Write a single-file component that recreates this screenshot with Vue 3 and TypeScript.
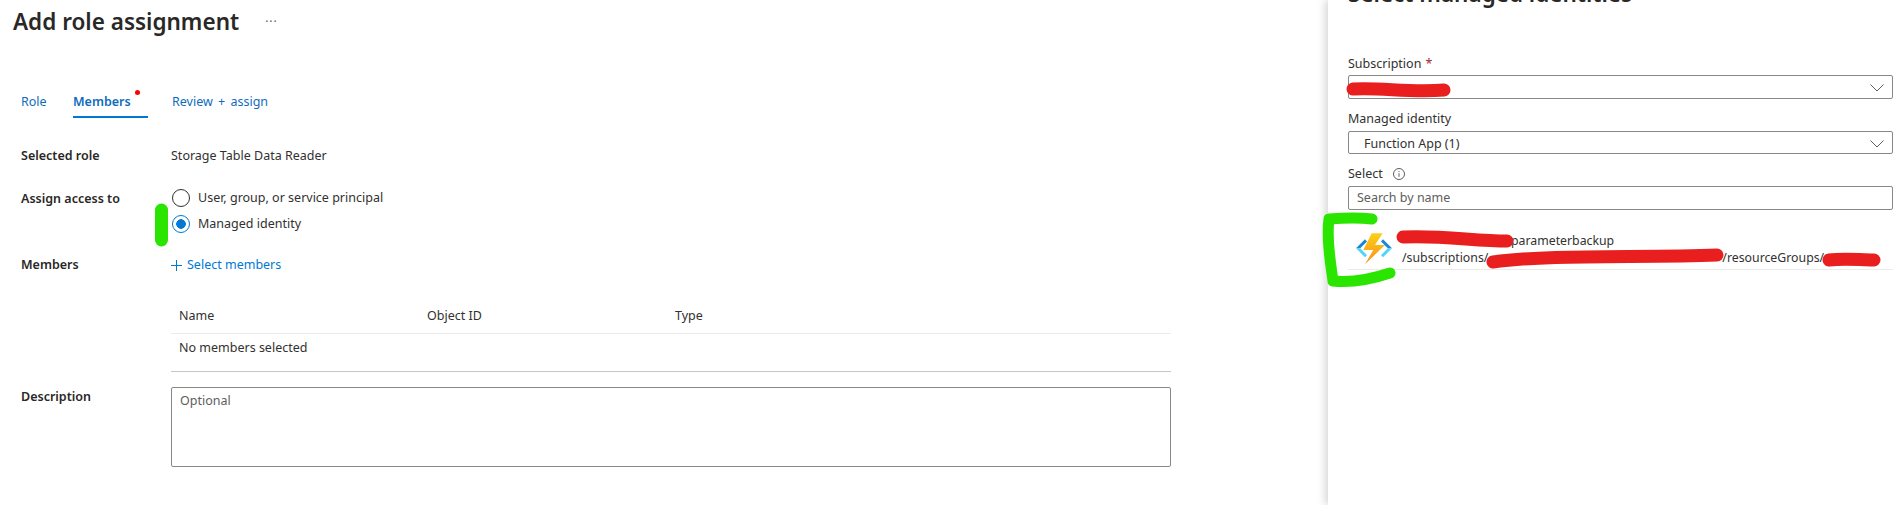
<script setup lang="ts">
import { ref } from "vue";

const tabs = ["Role", "Members", "Review + assign"];
const activeTab = ref<string>("Members");

const accessOptions = ["User, group, or service principal", "Managed identity"];
const assignTo = ref<string>("Managed identity");

const columns = ["Name", "Object ID", "Type"];
</script>

<template>
  <div class="page">
    <main class="blade">
      <header class="blade-head">
        <h1>Add role assignment</h1>
        <span class="more">···</span>
      </header>

      <nav class="tabs">
        <a v-for="tab in tabs" :key="tab" class="tab" :class="{ active: tab === activeTab }">
          {{ tab }}
          <i v-if="tab === 'Members'" class="dot"></i>
        </a>
      </nav>

      <div class="row first">
        <label>Selected role</label>
        <div>Storage Table Data Reader</div>
      </div>

      <div class="row access">
        <label>Assign access to</label>
        <div>
          <div v-for="opt in accessOptions" :key="opt" class="radio-line">
            <span class="radio" :class="{ on: opt === assignTo }"></span>
            {{ opt }}
          </div>
        </div>
      </div>

      <div class="row members">
        <label>Members</label>
        <a class="add-link">
          <svg class="plus" viewBox="0 0 11 11"><path d="M5.500 0v11M0 5.500h11" /></svg>
          Select members
        </a>
      </div>

      <div class="table">
        <div class="thead">
          <span v-for="col in columns" :key="col">{{ col }}</span>
        </div>
        <div class="tbody">No members selected</div>
      </div>

      <div class="row description">
        <label>Description</label>
        <textarea placeholder="Optional"></textarea>
      </div>
    </main>

    <aside class="panel">
      <h2>Select managed identities</h2>

      <div class="field sub">
        <div class="field-label">Subscription <b>*</b></div>
        <div class="box">
          <svg class="chevron" viewBox="0 0 14 8"><path d="M.5.5 7 7l6.500-6.500" /></svg>
        </div>
      </div>

      <div class="field">
        <div class="field-label">Managed identity</div>
        <div class="box short">
          <span class="value">Function App (1)</span>
          <svg class="chevron" viewBox="0 0 14 8"><path d="M.5.5 7 7l6.500-6.500" /></svg>
        </div>
      </div>

      <div class="field">
        <div class="field-label">
          Select
          <svg class="info" viewBox="0 0 12 12">
            <circle cx="6" cy="6" r="5.500" />
            <path d="M6 5.200v3.600M6 3v1" />
          </svg>
        </div>
        <input class="search" placeholder="Search by name" />
      </div>

      <div class="result">
        <svg class="func-icon" viewBox="0 0 36 33">
          <defs>
            <linearGradient id="bolt" x1="0" y1="0" x2="0" y2="1">
              <stop offset="0" stop-color="#fcd116" />
              <stop offset="1" stop-color="#f78d1e" />
            </linearGradient>
          </defs>
          <path d="M9 6.300 0 15.300h4.200L11 8.500z" fill="#1a86d8" />
          <path d="M0 15.300l9 9 2-2-6.800-7z" fill="#50d4fa" />
          <path d="M27 6.300l9 9h-4.200L25 8.500z" fill="#1a86d8" />
          <path d="M36 15.300l-9 9-2-2 6.800-7z" fill="#50d4fa" />
          <path d="M26.700.3H15.700L7.300 17h10L9 31.300 29 12H19z" fill="url(#bolt)" />
        </svg>
        <div class="result-text">
          <div><span class="hidden-name"></span>parameterbackup</div>
          <div>/subscriptions/<span class="hidden-sub"></span>/resourceGroups/</div>
        </div>
      </div>
    </aside>

    <!-- hand-drawn marks on top of the screenshot -->
    <svg class="marks" viewBox="0 0 1901 505">
      <g fill="none" stroke-linecap="round" stroke-linejoin="round">
        <path d="M161.500 210V240" stroke="#2ae500" stroke-width="13" />
        <path d="M1372 219C1355 217 1342 218 1329 219C1326 240 1331 265 1333 281C1352 283 1372 279 1390 273" stroke="#2ae500" stroke-width="11" />
        <g stroke="#e91f1f">
          <path d="M1353 89C1380 87 1410 93 1444 90" stroke-width="13" />
          <path d="M1403 237C1440 235 1475 241 1507 241" stroke-width="13" />
          <path d="M1493 262C1550 254 1640 258 1717 255" stroke-width="13" />
          <path d="M1829 260C1845 258 1860 260 1874 260" stroke-width="13" />
        </g>
      </g>
    </svg>
  </div>
</template>

<style scoped>
.page {
  position: relative;
  display: flex;
  width: 1901px;
  height: 505px;
  overflow: hidden;
  background: #fff;
  color: #323130;
  font-family: "Noto Sans", "Open Sans", sans-serif;
  font-size: 12.500px;
  line-height: 20px;
}

.blade {
  flex: 1;
  padding-left: 21px;
}

.blade-head {
  display: flex;
  align-items: center;
  height: 44px;
  margin-left: -8px;
}

h1 {
  margin: 0;
  color: #292827;
  font-size: 22.500px;
  font-weight: 600;
  white-space: nowrap;
}

.more {
  margin-left: 26px;
  color: #605e5c;
  font-size: 12px;
  letter-spacing: 1px;
}

.tabs {
  display: flex;
  margin-top: 44px;
  height: 30px;
}

.tab {
  position: relative;
  height: 30px;
  box-sizing: border-box;
  line-height: 28px;
  color: #0f6cbd;
  word-spacing: 2px;
  white-space: nowrap;
}

.tab:nth-child(1) {
  width: 52px;
}

.tab:nth-child(2) {
  width: 75px;
  margin-right: 24px;
}

.tab.active {
  font-weight: 600;
  border-bottom: 2px solid #0078d4;
}

.dot {
  position: absolute;
  top: 2px;
  left: 62px;
  width: 5px;
  height: 5px;
  border-radius: 50%;
  background: #f00;
}

.row {
  display: grid;
  grid-template-columns: 150px 1000px;
}

.row label {
  color: #292827;
  font-weight: 600;
}

.first {
  margin-top: 28px;
}

.access {
  margin-top: 19px;
}

.access label {
  line-height: 28px;
}

.radio-line {
  display: flex;
  align-items: center;
  gap: 8px;
  height: 26px;
  padding-left: 1px;
}

.radio {
  box-sizing: border-box;
  width: 18px;
  height: 18px;
  border: 1px solid #323130;
  border-radius: 50%;
}

.radio.on {
  border-color: #0078d4;
  background: radial-gradient(circle, #0078d4 0 4.500px, #fff 5px);
}

.members {
  margin-top: 18px;
}

.add-link {
  display: flex;
  align-items: center;
  gap: 5px;
  color: #0078d4;
}

.plus {
  width: 11px;
  height: 11px;
  fill: none;
  stroke: #0078d4;
}

.table {
  width: 1000px;
  margin: 24px 0 0 150px;
}

.thead {
  display: grid;
  grid-template-columns: 248px 248px 1fr;
  height: 35px;
  box-sizing: border-box;
  padding: 7px 0 0 8px;
  border-bottom: 1px solid #edebe9;
}

.tbody {
  height: 38px;
  box-sizing: border-box;
  padding: 4px 0 0 8px;
  border-bottom: 1px solid #c8c6c4;
}

.description {
  margin-top: 15px;
}

textarea {
  display: block;
  box-sizing: border-box;
  width: 1000px;
  height: 80px;
  padding: 3px 8px;
  border: 1px solid #8a8886;
  border-radius: 2px;
  outline: none;
  resize: none;
  font: inherit;
}

textarea::placeholder,
.search::placeholder {
  color: #605e5c;
  opacity: 1;
}

.panel {
  flex: none;
  box-sizing: border-box;
  width: 573px;
  padding: 0 8px 0 20px;
  box-shadow: -3px 0 8px rgba(0, 0, 0, 0.16);
}

h2 {
  margin: -21px 0 0;
  color: #292827;
  font-size: 22.500px;
  line-height: 30px;
  font-weight: 600;
  white-space: nowrap;
}

.field {
  margin-top: 10px;
}

.sub {
  margin-top: 44px;
}

.field-label {
  display: flex;
  align-items: center;
  gap: 4px;
  height: 20px;
  margin-bottom: 2px;
}

.sub .field-label {
  box-sizing: border-box;
  padding-top: 2px;
}

.field-label b {
  color: #a4262c;
  font-weight: 400;
}

.box,
.search {
  display: block;
  position: relative;
  box-sizing: border-box;
  width: 100%;
  height: 24px;
  border: 1px solid #8a8886;
  border-radius: 2px;
}

.box.short {
  height: 23px;
  line-height: 23px;
}

.value {
  margin-left: 15px;
}

.chevron {
  position: absolute;
  top: 8px;
  right: 8px;
  width: 14px;
  height: 8px;
  fill: none;
  stroke: #605e5c;
}

.info {
  width: 12px;
  height: 12px;
  margin-left: 6px;
  fill: none;
  stroke: #605e5c;
}

.search {
  padding: 0 8px 1px;
  outline: none;
  font: inherit;
  line-height: 20px;
}

.result {
  display: flex;
  align-items: center;
  gap: 10px;
  height: 40px;
  box-sizing: border-box;
  margin-top: 20px;
  padding-left: 8px;
  border-bottom: 1px solid #edebe9;
}

.func-icon {
  flex: none;
  width: 36px;
  height: 33px;
}

.result-text {
  margin-top: -2px;
  font-size: 12.300px;
  line-height: 17px;
  white-space: nowrap;
}

.hidden-name {
  display: inline-block;
  width: 109px;
}

.hidden-sub {
  display: inline-block;
  width: 234px;
}

.marks {
  position: absolute;
  top: 0;
  left: 0;
  width: 1901px;
  height: 505px;
  pointer-events: none;
}
</style>

<style>
html,
body {
  margin: 0;
  overflow: hidden;
}
</style>
